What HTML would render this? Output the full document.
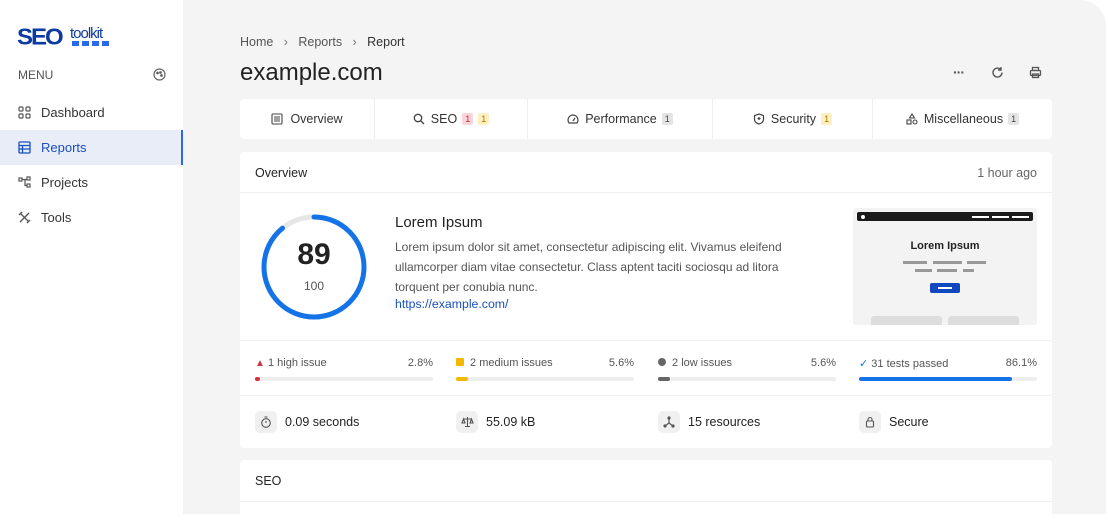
<!DOCTYPE html>
<html><head><meta charset="utf-8"><style>
*{box-sizing:border-box;margin:0;padding:0}
body{width:1108px;height:514px;overflow:hidden;background:#fff;font-family:"Liberation Sans",Arial,sans-serif;color:#222;position:relative}
.side{position:absolute;left:0;top:0;width:183px;height:514px;background:#fff}
.main{position:absolute;left:183px;top:0;width:923px;height:514px;background:#f4f4f4;border-top-right-radius:26px}
.abs{position:absolute}
.nav{position:absolute;left:0;width:183px;height:35px;display:flex;align-items:center;padding-left:18px;font-size:13px;color:#333}
.nav svg{margin-right:10px}
.card{position:absolute;left:57px;width:812px;background:#fff;border-radius:4px}
.tab{position:absolute;top:0;height:40px;display:flex;align-items:center;justify-content:center;font-size:12.5px;color:#333;border-right:1px solid #eee}
.b{display:inline-block;font-size:9px;padding:1px 3px;border-radius:2px;margin-left:5px;line-height:10px}
.sep{position:absolute;left:0;width:812px;height:1px;background:#eee}
.iss{position:absolute;top:16px;width:178px;font-size:11px;color:#555}
.iss .p{position:absolute;right:0;top:0}
.bar{position:absolute;top:20px;left:0;width:178px;height:4px;background:#eee;border-radius:2px}
.bar i{display:block;height:4px;border-radius:2px}
.st{position:absolute;top:15px;display:flex;align-items:center;font-size:12.5px;color:#222}
.ic{width:22px;height:22px;background:#f0f0f0;border-radius:5px;display:flex;align-items:center;justify-content:center;margin-right:8px}
</style></head><body>
<div class="side">
 <div class="abs" style="left:17px;top:24px;font-weight:900;font-size:24px;color:#0d3aa0;letter-spacing:-2px;transform:scaleY(0.95)">SEO</div>
 <div class="abs" style="left:70px;top:25px;font-size:15px;color:#0d3aa0;letter-spacing:-1px">toolkit</div>
 <div class="abs" style="left:72px;top:41px;width:39px;height:5px;background:repeating-linear-gradient(90deg,#2a6ae8 0 7px,transparent 7px 10px)"></div>
 <div class="abs" style="left:18px;top:68px;font-size:12px;color:#555">MENU</div>
 <svg class="abs" style="left:153px;top:68px" width="13" height="13" viewBox="0 0 13 13" fill="none" stroke="#666" stroke-width="1.2"><circle cx="6.5" cy="6.5" r="5.5"/><circle cx="4.5" cy="5" r=".8" fill="#666"/><circle cx="7.5" cy="4.5" r=".8" fill="#666"/><circle cx="8.5" cy="7.5" r=".8" fill="#666"/></svg>
 <div class="nav" style="top:95px"><svg width="13" height="13" viewBox="0 0 13 13" fill="none" stroke="#555" stroke-width="1.2"><rect x="1" y="1" width="4" height="4" rx="1"/><rect x="8" y="1" width="4" height="4" rx="1"/><rect x="1" y="8" width="4" height="4" rx="1"/><rect x="8" y="8" width="4" height="4" rx="1"/></svg>Dashboard</div>
 <div class="nav" style="top:130px;background:#e8edf8;color:#1a4fc0;border-right:2px solid #2a6ae8"><svg width="13" height="13" viewBox="0 0 13 13" fill="none" stroke="#1a4fc0" stroke-width="1.3"><rect x="1" y="1" width="11" height="11" rx="1"/><path d="M1 4.5h11M1 8h11M4.5 4.5v7.5"/></svg>Reports</div>
 <div class="nav" style="top:165px"><svg width="13" height="13" viewBox="0 0 13 13" fill="none" stroke="#555" stroke-width="1.2"><rect x="1" y="2" width="3" height="3"/><rect x="9" y="1" width="3" height="3"/><rect x="9" y="8" width="3" height="3"/><path d="M4 3.5h5M7 3.5v6h2"/></svg>Projects</div>
 <div class="nav" style="top:200px"><svg width="13" height="13" viewBox="0 0 13 13" fill="none" stroke="#555" stroke-width="1.3"><path d="M2 2l9 9M11 2L2 11M1 4l3-3M9 12l3-3"/></svg>Tools</div>
</div>
<div class="main">
 <div class="abs" style="left:57px;top:35px;font-size:12.5px;color:#555">Home &nbsp;&nbsp;<span style="color:#777">›</span>&nbsp;&nbsp; Reports &nbsp;&nbsp;<span style="color:#777">›</span>&nbsp;&nbsp; <span style="color:#333">Report</span></div>
 <div class="abs" style="left:57px;top:59px;font-size:24px;color:#222">example.com</div>
 <div class="abs" style="left:770px;top:64px;font-size:14px;color:#555;letter-spacing:-1px;font-weight:bold">···</div>
 <svg class="abs" style="left:808px;top:66px" width="13" height="13" viewBox="0 0 13 13" fill="none" stroke="#555" stroke-width="1.4"><path d="M11 6.5A4.5 4.5 0 1 1 9.5 3.2M10 1v3H7"/></svg>
 <svg class="abs" style="left:846px;top:66px" width="13" height="13" viewBox="0 0 13 13" fill="none" stroke="#555" stroke-width="1.3"><rect x="3.5" y="1.5" width="6" height="3"/><rect x="1.5" y="4.5" width="10" height="5" rx="1"/><rect x="3.5" y="8" width="6" height="3.5"/></svg>
 <div class="card" style="top:99px;height:40px">
  <div class="tab" style="left:0;width:135px"><svg width="12" height="12" viewBox="0 0 12 12" fill="none" stroke="#444" stroke-width="1.1" style="margin-right:7px"><rect x="1" y="1" width="10" height="10" rx="1"/><path d="M3 4h6M3 6h6M3 8h6"/></svg>Overview</div>
  <div class="tab" style="left:135px;width:153px"><svg width="12" height="12" viewBox="0 0 12 12" fill="none" stroke="#444" stroke-width="1.3" style="margin-right:6px"><circle cx="5" cy="5" r="3.7"/><path d="M8 8l3 3"/></svg>SEO<span class="b" style="background:#fbd5d9;color:#c62836">1</span><span class="b" style="background:#fdefc0;color:#a37800">1</span></div>
  <div class="tab" style="left:288px;width:185px"><svg width="12" height="12" viewBox="0 0 12 12" fill="none" stroke="#444" stroke-width="1.2" style="margin-right:6px"><path d="M2 10a5 5 0 1 1 8 0z"/><path d="M6 8l2-3"/></svg>Performance<span class="b" style="background:#e4e4e4;color:#444">1</span></div>
  <div class="tab" style="left:473px;width:160px"><svg width="12" height="12" viewBox="0 0 12 12" fill="none" stroke="#444" stroke-width="1.2" style="margin-right:6px"><path d="M6 1l4.5 1.5v3.5c0 3-2.5 4.5-4.5 5C4 10.5 1.5 9 1.5 6V2.5z"/><path d="M6 4v3M4.5 5.5h3"/></svg>Security<span class="b" style="background:#fdefc0;color:#a37800">1</span></div>
  <div class="tab" style="left:633px;width:179px;border:0"><svg width="12" height="12" viewBox="0 0 12 12" fill="none" stroke="#444" stroke-width="1.1" style="margin-right:6px"><path d="M6 1l2.5 4h-5z"/><rect x="1" y="7" width="4" height="4"/><circle cx="9" cy="9" r="2"/></svg>Miscellaneous<span class="b" style="background:#e4e4e4;color:#444">1</span></div>
 </div>
 <div class="card" style="top:152px;height:296px">
  <div class="abs" style="left:15px;top:14px;font-size:12.5px;color:#222">Overview</div>
  <div class="abs" style="right:15px;top:14px;font-size:12.5px;color:#666">1 hour ago</div>
  <div class="sep" style="top:40px"></div>
  <svg class="abs" style="left:20px;top:61px" width="108" height="108" viewBox="0 0 108 108"><circle cx="54" cy="54" r="50" fill="none" stroke="#e6e6e6" stroke-width="5"/><circle cx="54" cy="54" r="50" fill="none" stroke="#1473e6" stroke-width="5" stroke-dasharray="279.6 314.2" transform="rotate(-90 54 54)" stroke-linecap="round"/></svg>
  <div class="abs" style="left:20px;top:86px;width:108px;text-align:center;font-size:30px;font-weight:bold;color:#222">89</div>
  <div class="abs" style="left:20px;top:127px;width:108px;text-align:center;font-size:12px;color:#555">100</div>
  <div class="abs" style="left:155px;top:62px;font-size:15px;color:#222">Lorem Ipsum</div>
  <div class="abs" style="left:155px;top:85px;width:420px;font-family:'Liberation Sans',Arial,sans-serif;font-size:12px;line-height:20px;color:#555">Lorem ipsum dolor sit amet, consectetur adipiscing elit. Vivamus eleifend ullamcorper diam vitae consectetur. Class aptent taciti sociosqu ad litora torquent per conubia nunc.</div>
  <div class="abs" style="left:155px;top:145px;font-size:12.3px;color:#1a4fc0">https://example.com/</div>
  <div class="abs" style="left:613px;top:56px;width:184px;height:117px;background:#f3f3f3;border-radius:3px;overflow:hidden">
   <div class="abs" style="left:4px;top:4px;width:176px;height:9px;background:#1a1a1a;border-radius:2px"></div>
   <div class="abs" style="left:8px;top:7px;width:4px;height:4px;background:#fff;border-radius:2px"></div>
   <div class="abs" style="left:119px;top:7.5px;width:17px;height:2px;background:#fff"></div><div class="abs" style="left:139px;top:7.5px;width:17px;height:2px;background:#fff"></div><div class="abs" style="left:159px;top:7.5px;width:17px;height:2px;background:#fff"></div>
   <div class="abs" style="left:0;top:32px;width:184px;text-align:center;font-size:11px;font-weight:bold;color:#222">Lorem Ipsum</div>
   <div class="abs" style="left:50px;top:53px;width:24px;height:3px;background:#999"></div><div class="abs" style="left:80px;top:53px;width:29px;height:3px;background:#999"></div><div class="abs" style="left:114px;top:53px;width:19px;height:3px;background:#999"></div>
   <div class="abs" style="left:62px;top:61px;width:17px;height:3px;background:#999"></div><div class="abs" style="left:84px;top:61px;width:20px;height:3px;background:#999"></div><div class="abs" style="left:110px;top:61px;width:11px;height:3px;background:#999"></div>
   <div class="abs" style="left:77px;top:75px;width:30px;height:10px;background:#0d47c2;border-radius:2px"></div>
   <div class="abs" style="left:85px;top:79px;width:14px;height:2px;background:#fff"></div>
   <div class="abs" style="left:18px;top:108px;width:71px;height:12px;background:#ddd;border-radius:3px"></div><div class="abs" style="left:95px;top:108px;width:71px;height:12px;background:#ddd;border-radius:3px"></div>
  </div>
  <div class="sep" style="top:188px"></div>
  <div class="abs" style="left:15px;top:189px;width:782px;height:54px">
   <div class="iss" style="left:0"><span style="color:#d63341;font-size:10px">▲</span> 1 high issue<span class="p">2.8%</span><div class="bar"><i style="width:5px;background:#d63341"></i></div></div>
   <div class="iss" style="left:201px"><span style="display:inline-block;width:8px;height:8px;background:#f5b800;border-radius:1px;margin-right:3px"></span> 2 medium issues<span class="p">5.6%</span><div class="bar"><i style="width:12px;background:#f5b800"></i></div></div>
   <div class="iss" style="left:403px"><span style="display:inline-block;width:8px;height:8px;background:#666;border-radius:4px;margin-right:3px"></span> 2 low issues<span class="p">5.6%</span><div class="bar"><i style="width:12px;background:#666"></i></div></div>
   <div class="iss" style="left:604px"><span style="color:#1473e6">✓</span> 31 tests passed<span class="p">86.1%</span><div class="bar"><i style="width:153px;background:#1473e6"></i></div></div>
  </div>
  <div class="sep" style="top:243px"></div>
  <div class="abs" style="left:15px;top:244px;width:782px;height:52px">
   <div class="st" style="left:0"><div class="ic"><svg width="12" height="12" viewBox="0 0 12 12" fill="none" stroke="#555" stroke-width="1.1"><circle cx="6" cy="7" r="4.3"/><path d="M4.5 1h3M6 7V5"/></svg></div>0.09 seconds</div>
   <div class="st" style="left:201px"><div class="ic"><svg width="13" height="12" viewBox="0 0 13 12" fill="none" stroke="#555" stroke-width="1.1"><path d="M6.5 1v9M2 3h9M1 7l1.5-4L4 7zM9 7l1.5-4L12 7zM4 10.5h5"/></svg></div>55.09 kB</div>
   <div class="st" style="left:403px"><div class="ic"><svg width="12" height="12" viewBox="0 0 12 12" fill="none" stroke="#555" stroke-width="1.2"><path d="M6 2v5L2 10M6 7l4 3"/><circle cx="6" cy="2" r="1" fill="#555"/><circle cx="2" cy="10" r="1" fill="#555"/><circle cx="10" cy="10" r="1" fill="#555"/></svg></div>15 resources</div>
   <div class="st" style="left:604px"><div class="ic"><svg width="12" height="12" viewBox="0 0 12 12" fill="none" stroke="#555" stroke-width="1.1"><rect x="2.5" y="5" width="7" height="6" rx="1"/><path d="M4 5V3.5a2 2 0 0 1 4 0V5"/></svg></div>Secure</div>
  </div>
 </div>
 <div class="card" style="top:460px;height:60px">
  <div class="abs" style="left:15px;top:14px;font-size:12.5px;color:#222">SEO</div>
  <div class="sep" style="top:41px"></div>
 </div>
</div>
</body></html>
